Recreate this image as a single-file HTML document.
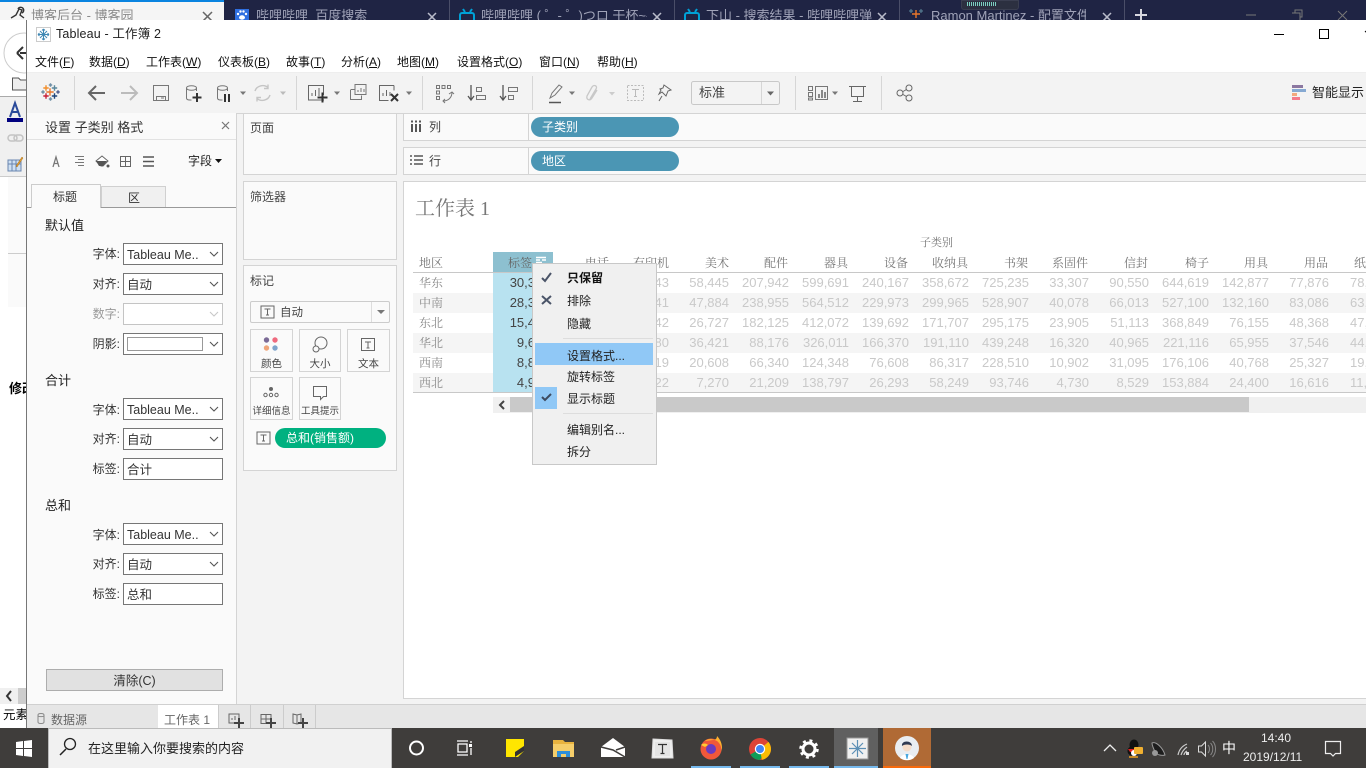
<!DOCTYPE html>
<html lang="zh-CN"><head><meta charset="utf-8"><title>Tableau - 工作簿 2</title>
<style>
*{box-sizing:border-box}
html,body{margin:0;padding:0;width:1366px;height:768px;overflow:hidden;background:#fff;font-family:"Liberation Sans","Noto Sans CJK SC",sans-serif;font-size:12px;color:#222}
.b{position:absolute}
.t{position:absolute;white-space:nowrap;line-height:16px}
.tab{position:absolute;top:8px;height:16px;line-height:16px;font-size:13px;color:#a0a3b8;white-space:nowrap;overflow:hidden}
.m{position:absolute;top:53px;font-size:12px;line-height:18px;color:#111;white-space:nowrap}
.p{position:absolute;background:#fafafa;border:1px solid #d4d4d4}
.lab{position:absolute;left:60px;width:60px;text-align:right;font-size:12px;line-height:16px;color:#333;white-space:nowrap}
.sel{position:absolute;left:123px;width:100px;height:22px;background:#fff;border:1px solid #767676;font-size:12.5px;line-height:21px;padding-left:3px;padding-top:1px;color:#333;white-space:nowrap;overflow:hidden}
.sel.d{border-color:#c4c4c4}
.h{position:absolute;top:255px;height:16px;line-height:16px;width:60px;text-align:right;font-family:"Liberation Serif","Noto Serif CJK SC",serif;font-size:12px;color:#777;white-space:nowrap}
.row{position:absolute;left:0;width:1366px;height:20px;line-height:20px;display:flex;font-size:13px;color:#c9c9c9}
.row.g{background:#f5f5f5}
.row span{display:block;flex:0 0 60px;width:60px;text-align:right;white-space:nowrap}
.row span.e{text-align:left;padding-left:21px}
.rl{position:absolute;left:419px;height:20px;line-height:20px;font-family:"Liberation Serif","Noto Serif CJK SC",serif;font-size:12px;color:#8a8a8a}
.mi{position:absolute;left:35px;font-size:12px;line-height:16px;color:#222;white-space:nowrap}
.mk{position:absolute;width:100%;text-align:center;font-size:10.5px;line-height:12px;color:#444;white-space:nowrap;left:0}
.btn{position:absolute;background:#fafafa;border:1px solid #d4d4d4;height:43px}
</style></head><body>

<!-- browser behind -->
<div class="b" style="left:0;top:0;width:1366px;height:20px;background:#1f2444"></div>
<div class="b" style="left:0;top:0;width:224px;height:20px;background:#f5f5f5"></div>
<div class="b" style="left:0;top:0;width:224px;height:2px;background:#0a84e0"></div>
<div class="tab" style="left:31px;color:#8a8a8a">博客后台 - 博客园</div>
<div class="tab" style="left:256px;width:165px">哔哩哔哩_百度搜索</div>
<div class="tab" style="left:481px;width:166px">哔哩哔哩 ( ゜- ゜)つロ 干杯~-bilibili</div>
<div class="tab" style="left:706px;width:166px">下山 - 搜索结果 - 哔哩哔哩弹幕视频网</div>
<div class="tab" style="left:931px;width:155px">Ramon Martinez - 配置文件 | Tableau</div>
<div class="b" style="left:961px;top:0;width:58px;height:10px;background:#2c3040;border-radius:0 0 3px 3px;border:1px solid #3a3e50"></div>
<div class="b" style="left:967px;top:2px;width:29px;height:4px;background:repeating-linear-gradient(90deg,#7bd0c0 0 1px,transparent 1px 2px)"></div>

<svg class="b" style="left:0;top:0" width="1366" height="20" viewBox="0 0 1366 20" fill="none">
<path d="M11 18l5-3 3-6 3 1-2 5 4 3M18 9a3 3 0 1 1 4 4" stroke="#333" stroke-width="1.4"/>
<path d="M203 12l9 9M212 12l-9 9" stroke="#666" stroke-width="1.5"/>
<rect x="235" y="9" width="14" height="11" fill="#2f6fe0"/>
<g fill="#fff"><circle cx="238" cy="14" r="1.200"/><circle cx="246" cy="14" r="1.200"/><circle cx="240.500" cy="11.500" r="1.200"/><circle cx="243.500" cy="11.500" r="1.200"/><ellipse cx="242" cy="17.500" rx="3" ry="2.200"/></g>
<rect x="460" y="13" width="14" height="9" rx="2" stroke="#00a1d6" stroke-width="2"/><path d="M463 9l2 3M472 9l-2 3" stroke="#00a1d6" stroke-width="2"/>
<rect x="685" y="13" width="14" height="9" rx="2" stroke="#00a1d6" stroke-width="2"/><path d="M688 9l2 3M697 9l-2 3" stroke="#00a1d6" stroke-width="2"/>
<path d="M916 10v8M912 14h8" stroke="#e8762b" stroke-width="1.4"/><path d="M911 9v4M909 11h4M921 9v4M919 11h4" stroke="#5b879b" stroke-width="1"/>
<g stroke="#b9bccb" stroke-width="1.5"><path d="M428 13l8 8M436 13l-8 8M653 13l8 8M661 13l-8 8M878 13l8 8M886 13l-8 8M1103 13l8 8M1111 13l-8 8"/></g>
<path d="M1141 9v12M1135 15h12" stroke="#d8d8e0" stroke-width="2"/>
<path d="M449.500 0v20M674.500 0v20M899.500 0v20M1124.500 0v20" stroke="#4a4e68"/>
<path d="M1246 15h10" stroke="#777"/><path d="M1292 13h8v7M1295 13v-3h7v7h-2" stroke="#777"/><path d="M1338 11l9 9M1347 11l-9 9" stroke="#777"/>
</svg>

<!-- left strip of browser -->
<div class="b" style="left:0;top:20px;width:27px;height:708px;background:#fff"></div>
<div class="b" style="left:0;top:96px;width:27px;height:81px;background:#f0f0f0;border-top:1px solid #aaa;border-bottom:1px solid #ccc"></div>
<div class="b" style="left:8px;top:177px;width:19px;height:130px;background:#fafafa"></div>
<div class="b" style="left:8px;top:253px;width:19px;height:1px;background:#ccc"></div>
<div class="t" style="left:9px;top:381px;font-size:13px;font-weight:bold;color:#000;width:17px;overflow:hidden">修改</div>
<div class="b" style="left:0;top:688px;width:27px;height:16px;background:#f0f0f0"></div>
<div class="b" style="left:18px;top:688px;width:9px;height:16px;background:#cdcdcd"></div>
<div class="t" style="left:3px;top:707px;font-size:12.500px;color:#000;width:23px;overflow:hidden">元素</div>
<svg class="b" style="left:0;top:20px" width="27" height="180" viewBox="0 20 27 180" fill="none">
<circle cx="24" cy="53" r="20" stroke="#ccc" stroke-width="1"/>
<path d="M20 53h8M17 53l6-6M17 53l6 6" stroke="#333" stroke-width="2"/>
<path d="M12.500 78h6l2 2h6v10h-14z" stroke="#555" fill="#eee"/>
<path d="M10 117l5-14 5 14M12 112h6" stroke="#2a4a9a" stroke-width="2"/><rect x="7" y="118" width="16" height="4" fill="#00007f"/>
<rect x="8" y="135" width="9" height="6" rx="3" stroke="#c3c3c3" stroke-width="1.500"/><rect x="14" y="135" width="9" height="6" rx="3" stroke="#c3c3c3" stroke-width="1.500"/>
<rect x="8" y="160" width="13" height="11" fill="#cfe0f2" stroke="#6a86b0"/><path d="M8 164h13M12 160v11M16 160v11" stroke="#6a86b0"/><path d="M16 166l6-9 1 1-6 9z" fill="#e8a030" stroke="#a06a18" stroke-width=".5"/>
</svg>
<svg class="b" style="left:0;top:688px" width="18" height="16"><path d="M11 3l-4 5 4 5" stroke="#333" stroke-width="2" fill="none"/></svg>

<!-- tableau window -->
<div class="b" style="left:26px;top:20px;width:1340px;height:708px;background:#f3f3f3;border-left:1px solid #777"></div>
<div class="b" style="left:27px;top:20px;width:1339px;height:52px;background:#fff"></div>
<div class="b" style="left:27px;top:72px;width:1339px;height:1px;background:#eee"></div>
<div class="b" style="left:27px;top:113px;width:1339px;height:1px;background:#d4d4d4"></div>
<div class="t" style="left:56px;top:26px;font-size:12.500px;letter-spacing:.15px;color:#222">Tableau - 工作簿 2</div>
<div class="m" style="left:35px">文件(<u>F</u>)</div>
<div class="m" style="left:89px">数据(<u>D</u>)</div>
<div class="m" style="left:146px">工作表(<u>W</u>)</div>
<div class="m" style="left:218px">仪表板(<u>B</u>)</div>
<div class="m" style="left:286px">故事(<u>T</u>)</div>
<div class="m" style="left:341px">分析(<u>A</u>)</div>
<div class="m" style="left:397px">地图(<u>M</u>)</div>
<div class="m" style="left:457px">设置格式(<u>O</u>)</div>
<div class="m" style="left:539px">窗口(<u>N</u>)</div>
<div class="m" style="left:597px">帮助(<u>H</u>)</div>
<div class="t" style="left:699px;top:85px;font-size:13px;color:#444;z-index:3">标准</div>
<div class="t" style="left:1312px;top:85px;font-size:13px;color:#222;z-index:3">智能显示</div>

<!-- format panel -->
<div class="b" style="left:27px;top:113px;width:210px;height:591px;background:#fafafa;border-right:1px solid #d4d4d4"></div>
<div class="b" style="left:27px;top:139px;width:209px;height:1px;background:#e2e2e2"></div>
<div class="t" style="left:45px;top:120px;font-size:13px;color:#333">设置 子类别 格式</div>
<div class="t" style="left:188px;top:153px;font-size:12px;color:#222">字段</div>
<div class="b" style="left:31px;top:207px;width:205px;height:1px;background:#999"></div>
<div class="b" style="left:101px;top:186px;width:65px;height:21px;background:#f0f0f0;border:1px solid #d0d0d0;border-bottom:0"></div>
<div class="b" style="left:31px;top:184px;width:70px;height:24px;background:#fafafa;border:1px solid #ccc;border-bottom:0"></div>
<div class="b" style="left:27px;top:207px;width:4px;height:1px;background:#999"></div>
<div class="t" style="left:53px;top:189px;font-size:12px;color:#333">标题</div>
<div class="t" style="left:128px;top:190px;font-size:12px;color:#333">区</div>

<div class="t" style="left:45px;top:218px;font-size:13px;color:#222">默认值</div>
<div class="lab" style="top:246px">字体:</div><div class="sel" style="top:243px">Tableau Me..</div>
<div class="lab" style="top:276px">对齐:</div><div class="sel" style="top:273px">自动</div>
<div class="lab" style="top:306px;color:#999">数字:</div><div class="sel d" style="top:303px"></div>
<div class="lab" style="top:336px">阴影:</div><div class="sel" style="top:333px"></div>
<div class="b" style="left:127px;top:337px;width:76px;height:14px;background:#fff;border:1px solid #999"></div>

<div class="t" style="left:45px;top:373px;font-size:13px;color:#222">合计</div>
<div class="lab" style="top:402px">字体:</div><div class="sel" style="top:398px">Tableau Me..</div>
<div class="lab" style="top:431px">对齐:</div><div class="sel" style="top:428px">自动</div>
<div class="lab" style="top:461px">标签:</div><div class="sel" style="top:458px">合计</div>

<div class="t" style="left:45px;top:498px;font-size:13px;color:#222">总和</div>
<div class="lab" style="top:527px">字体:</div><div class="sel" style="top:523px">Tableau Me..</div>
<div class="lab" style="top:556px">对齐:</div><div class="sel" style="top:553px">自动</div>
<div class="lab" style="top:586px">标签:</div><div class="sel" style="top:583px">总和</div>

<div class="b" style="left:46px;top:669px;width:177px;height:22px;background:#e1e1e1;border:1px solid #adadad;text-align:center;font-size:12.500px;line-height:22px;color:#333">清除(C)</div>

<!-- shelves -->
<div class="p" style="left:243px;top:113px;width:154px;height:62px"></div>
<div class="t" style="left:250px;top:120px;color:#444">页面</div>
<div class="p" style="left:243px;top:181px;width:154px;height:79px"></div>
<div class="t" style="left:250px;top:189px;color:#444">筛选器</div>
<div class="p" style="left:243px;top:265px;width:154px;height:206px"></div>
<div class="t" style="left:250px;top:273px;color:#444">标记</div>

<div class="b" style="left:250px;top:301px;width:140px;height:22px;background:#fafafa;border:1px solid #ccc;border-radius:2px"></div>
<div class="b" style="left:371px;top:302px;width:1px;height:20px;background:#ddd"></div>
<div class="t" style="left:280px;top:305px;font-size:11.500px;color:#444">自动</div>

<div class="btn" style="left:250px;top:329px;width:43px"><div class="mk" style="top:28px">颜色</div></div>
<div class="btn" style="left:299px;top:329px;width:42px"><div class="mk" style="top:28px">大小</div></div>
<div class="btn" style="left:347px;top:329px;width:43px"><div class="mk" style="top:28px">文本</div></div>
<div class="btn" style="left:250px;top:377px;width:43px"><div class="mk" style="top:28px;font-size:9.500px">详细信息</div></div>
<div class="btn" style="left:299px;top:377px;width:42px"><div class="mk" style="top:28px;font-size:9.500px">工具提示</div></div>
<div class="b" style="left:275px;top:428px;width:111px;height:20px;border-radius:10px;background:#00b180;color:#fff;font-size:12px;line-height:20px;padding-left:11px;white-space:nowrap">总和(销售额)</div>

<!-- columns / rows shelves -->
<div class="b" style="left:403px;top:113px;width:963px;height:28px;background:#fafafa;border:1px solid #d4d4d4;border-right:0"></div>
<div class="b" style="left:403px;top:147px;width:963px;height:28px;background:#fafafa;border:1px solid #d4d4d4;border-right:0"></div>
<div class="b" style="left:528px;top:114px;width:1px;height:26px;background:#d4d4d4"></div>
<div class="b" style="left:528px;top:148px;width:1px;height:26px;background:#d4d4d4"></div>
<div class="t" style="left:429px;top:119px;color:#444">列</div>
<div class="t" style="left:429px;top:153px;color:#444">行</div>
<div class="b" style="left:531px;top:117px;width:148px;height:20px;border-radius:10px;background:#4b96b4;color:#fff;font-size:12px;line-height:20px;padding-left:11px">子类别</div>
<div class="b" style="left:531px;top:151px;width:148px;height:20px;border-radius:10px;background:#4b96b4;color:#fff;font-size:12px;line-height:20px;padding-left:11px">地区</div>

<!-- view -->
<div class="b" style="left:403px;top:181px;width:963px;height:518px;background:#fff;border:1px solid #d4d4d4;border-right:0"></div>
<div class="t" style="left:415px;top:196px;font-family:'Liberation Serif','Noto Serif CJK SC',serif;font-size:20px;line-height:26px;color:#777">工作表 1</div>
<div class="t" style="left:920px;top:235px;font-family:'Liberation Serif','Noto Serif CJK SC',serif;font-size:11px;color:#777">子类别</div>

<div class="b" style="left:413px;top:273px;width:953px;height:120px;overflow:hidden">
 <div class="row" style="left:76px;top:0;width:960px"><span></span><span></span><span>43</span><span>58,445</span><span>207,942</span><span>599,691</span><span>240,167</span><span>358,672</span><span>725,235</span><span>33,307</span><span>90,550</span><span>644,619</span><span>142,877</span><span>77,876</span><span class="e">78,</span></div>
 <div class="row g" style="left:0;top:20px;width:953px"></div>
 <div class="row" style="left:76px;top:20px;width:960px"><span></span><span></span><span>41</span><span>47,884</span><span>238,955</span><span>564,512</span><span>229,973</span><span>299,965</span><span>528,907</span><span>40,078</span><span>66,013</span><span>527,100</span><span>132,160</span><span>83,086</span><span class="e">63,</span></div>
 <div class="row" style="left:76px;top:40px;width:960px"><span></span><span></span><span>42</span><span>26,727</span><span>182,125</span><span>412,072</span><span>139,692</span><span>171,707</span><span>295,175</span><span>23,905</span><span>51,113</span><span>368,849</span><span>76,155</span><span>48,368</span><span class="e">47,</span></div>
 <div class="row g" style="left:0;top:60px;width:953px"></div>
 <div class="row" style="left:76px;top:60px;width:960px"><span></span><span></span><span>80</span><span>36,421</span><span>88,176</span><span>326,011</span><span>166,370</span><span>191,110</span><span>439,248</span><span>16,320</span><span>40,965</span><span>221,116</span><span>65,955</span><span>37,546</span><span class="e">44,</span></div>
 <div class="row" style="left:76px;top:80px;width:960px"><span></span><span></span><span>19</span><span>20,608</span><span>66,340</span><span>124,348</span><span>76,608</span><span>86,317</span><span>228,510</span><span>10,902</span><span>31,095</span><span>176,106</span><span>40,768</span><span>25,327</span><span class="e">19,</span></div>
 <div class="row g" style="left:0;top:100px;width:953px"></div>
 <div class="row" style="left:76px;top:100px;width:960px"><span></span><span></span><span>22</span><span>7,270</span><span>21,209</span><span>138,797</span><span>26,293</span><span>58,249</span><span>93,746</span><span>4,730</span><span>8,529</span><span>153,884</span><span>24,400</span><span>16,616</span><span class="e">11,</span></div>
</div>

<div class="b" style="left:493px;top:252px;width:60px;height:20px;background:#8dc0d0"></div>
<div class="b" style="left:493px;top:273px;width:60px;height:120px;background:#b8e2f0"></div>
<div class="b" style="left:413px;top:272px;width:953px;height:1px;background:#c8c8c8"></div>
<div class="b" style="left:413px;top:392px;width:953px;height:1px;background:#c8c8c8"></div>

<div class="t" style="left:419px;top:255px;font-family:'Liberation Serif','Noto Serif CJK SC',serif;font-size:12px;color:#777">地区</div>
<div class="t" style="left:508px;top:255px;font-family:'Liberation Serif','Noto Serif CJK SC',serif;font-size:12px;color:#666">标签</div>
<div class="h" style="left:549px">电话</div><div class="h" style="left:609px">有印机</div><div class="h" style="left:669px">美术</div><div class="h" style="left:728px">配件</div><div class="h" style="left:788px">器具</div><div class="h" style="left:848px">设备</div><div class="h" style="left:908px">收纳具</div><div class="h" style="left:968px">书架</div><div class="h" style="left:1028px">系固件</div><div class="h" style="left:1088px">信封</div><div class="h" style="left:1149px">椅子</div><div class="h" style="left:1208px">用具</div><div class="h" style="left:1268px">用品</div>
<div class="t" style="left:1354px;top:255px;font-family:'Liberation Serif','Noto Serif CJK SC',serif;font-size:12px;color:#777;width:12px;overflow:hidden">纸张</div>

<div class="rl" style="top:273px">华东</div><div class="rl" style="top:293px">中南</div><div class="rl" style="top:313px">东北</div><div class="rl" style="top:333px">华北</div><div class="rl" style="top:353px">西南</div><div class="rl" style="top:373px">西北</div>

<div class="b" style="left:480px;top:273px;width:55px;height:120px;font-size:13px;line-height:20px;color:#444;text-align:right">
 <div>30,3</div><div>28,3</div><div>15,4</div><div>9,6</div><div>8,8</div><div>4,9</div>
</div>

<!-- scrollbar -->
<div class="b" style="left:493px;top:397px;width:873px;height:16px;background:#f0f0f0"></div>
<div class="b" style="left:510px;top:397px;width:739px;height:15px;background:#c9c9c9"></div>

<!-- bottom tabs -->
<div class="b" style="left:27px;top:704px;width:1339px;height:24px;background:#e6e6e6;border-top:1px solid #d0d0d0"></div>
<div class="b" style="left:158px;top:705px;width:60px;height:23px;background:#fff"></div>
<div class="b" style="left:218px;top:705px;width:1px;height:23px;background:#ccc"></div>
<div class="b" style="left:250px;top:705px;width:1px;height:23px;background:#ccc"></div>
<div class="b" style="left:283px;top:705px;width:1px;height:23px;background:#ccc"></div>
<div class="b" style="left:315px;top:705px;width:1px;height:23px;background:#ccc"></div>
<div class="t" style="left:51px;top:712px;font-size:12px;color:#666">数据源</div>
<div class="t" style="left:164px;top:712px;font-size:12px;color:#666">工作表 1</div>

<!-- icons overlay -->
<svg class="b" style="left:0;top:0" width="1366" height="728" viewBox="0 0 1366 728" fill="none">
<defs>
<g id="car"><path d="M-3-1.500h6l-3 3.500z" fill="#777"/></g>
<g id="tb"><rect x="-6.500" y="-6" width="13" height="12" stroke="#666"/><path d="M-3-3h6M0-3v6M-1.500 3h3" stroke="#666"/></g>
</defs>
<!-- window title icon -->
<rect x="36.500" y="27.500" width="14" height="14" stroke="#ccc" fill="#fff"/>
<g stroke="#3f88b4" stroke-width="1"><path d="M43.500 29v11M38 34.500h11M43.500 29l-1.500 1.500M43.500 29l1.500 1.500M43.500 40l-1.500-1.500M43.500 40l1.500-1.500M38 34.500l1.500-1.500M38 34.500l1.500 1.500M49 34.500l-1.500-1.500M49 34.500l-1.500 1.500M40 31l7 7M47 31l-7 7"/></g>
<path d="M1274 34.500h10" stroke="#000"/><rect x="1319.500" y="29.500" width="9" height="9" stroke="#000"/><path d="M1365 31l2 2" stroke="#000"/>

<!-- toolbar: tableau logo -->
<g stroke-width="1.400">
<path d="M46 85.300v5.400M43.300 88h5.400" stroke="#f28e2b"/>
<path d="M54.500 85.300v5.400M51.800 88h5.400" stroke="#5b879b"/>
<path d="M46 93.300v5.400M43.300 96h5.400" stroke="#c72037"/>
<path d="M54.500 93.300v5.400M51.800 96h5.400" stroke="#1f447a"/>
<path d="M50 88.300v7.400M46.300 92h7.400" stroke="#e8762b"/>
<path d="M50.500 83.300v3.400M48.800 85h3.400M50.500 97.300v3.400M48.800 99h3.400" stroke="#6f8fa6"/>
<path d="M43 90.300v3.400M41.300 92h3.400" stroke="#6b8ca0"/>
<path d="M58 90.300v3.400M56.300 92h3.400" stroke="#4a5a8c"/>
</g>
<g stroke="#d6d6d6"><path d="M74.500 76v34M296.500 76v34M422.500 76v34M532.500 76v34M795.500 76v34M881.500 76v34"/></g>
<path d="M105 93H90M96 86l-7 7 7 7" stroke="#666" stroke-width="2"/>
<path d="M121 93h15M130 86l7 7-7 7" stroke="#bbb" stroke-width="2"/>
<path d="M153.500 85.500h15v15h-15zM156.500 100.500v-4h9v4M161 98h3" stroke="#777"/>
<path d="M186.500 88c0-3 10-3 10 0v3M186.500 88v10c0 2 2 2 5 2M186.500 88c0 3 10 3 10 0" stroke="#777"/><path d="M197 93v9M192.500 97.500h9" stroke="#333" stroke-width="2"/>
<path d="M217.500 88c0-3 10-3 10 0v3M217.500 88v10c0 2 2 2 5 2M217.500 88c0 3 10 3 10 0" stroke="#777"/><path d="M225 94v8M229 94v8" stroke="#333" stroke-width="2"/>
<use href="#car" x="243" y="93"/>
<path d="M255 91a8 7.500 0 0 1 13-3.500M270 95a8 7.500 0 0 1-13 3.500M268 84.500v4h-4M257 101.500v-4h4" stroke="#c5c5c5" stroke-width="1.400"/>
<path d="M280 91.500h6l-3 3.500z" fill="#bbb"/>
<path d="M324 100h-15.500V85.500h15V95M312 96v-3M315.500 96v-6M319 96v-8" stroke="#666"/><path d="M322.500 92.500v10M317.500 97.500h10" stroke="#333" stroke-width="2"/>
<use href="#car" x="337" y="93"/>
<path d="M355 84.500h11v10h-11zM351 89.500h4M350.500 89.500v10h11v-4M358 92v-2M361 92v-4M364 92v-3" stroke="#777"/>
<path d="M394 85.500h-14.500v15h9M383 96v-3M386.500 96v-6M390 96v-4M394 85.500v5" stroke="#666"/><path d="M391 94l7 7M398 94l-7 7" stroke="#333" stroke-width="2"/>
<use href="#car" x="409" y="93"/>
<path d="M436.500 85.500h3v3h-3zM442 85.500h3v3h-3zM447.500 85.500h3v3h-3zM436.500 91h3v3h-3zM436.500 96.500h3v3h-3z" stroke="#777"/><path d="M443 101c5 0 9-3 9-9M449 94l3-2 2 2M445 99l-2 2 2 2" stroke="#777"/>
<path d="M471 85v14M468 96l3 4 3-4" stroke="#555" stroke-width="1.300"/><path d="M476.500 87.500h5v4h-5zM476.500 95.500h9v4h-9z" stroke="#777"/>
<path d="M503 85v14M500 96l3 4 3-4" stroke="#555" stroke-width="1.300"/><path d="M508.500 87.500h9v4h-9zM508.500 95.500h5v4h-5z" stroke="#777"/>
<path d="M550 98l2-5 7-8 3 2-7 8z" stroke="#777"/><path d="M549 102.500h12" stroke="#555" stroke-width="1.500"/>
<use href="#car" x="572" y="93"/>
<path d="M590 99l6-10c2-3-2-5-4-2l-5 9c-1 4 3 5 5 2l5-8" stroke="#c8c8c8" stroke-width="1.300"/>
<path d="M609 92h6l-3 3.500z" fill="#ccc"/>
<rect x="627.500" y="85.500" width="16" height="15" stroke="#bbb" stroke-dasharray="2 1.500"/><path d="M632 89.500h7M635.500 89.500v7M634 96.500h3" stroke="#bbb"/>
<path d="M664 85l7 5-3 1-2 5-4-4-3 2 2-4-1-1 3-1z" stroke="#666"/><path d="M659 101l3-5" stroke="#666"/>
<rect x="691.500" y="81.500" width="88" height="23" rx="2" fill="#f3f3f3" stroke="#c8c8c8"/><path d="M761.500 82v22" stroke="#d6d6d6"/><path d="M767 91.500h7l-3.500 4z" fill="#666"/>
<path d="M808.500 86.500h4v4h-4zM808.500 92.500h4v4h-4zM808.500 98h4v2h-4zM815.500 86.500h12v13h-12z" stroke="#777"/><path d="M819 98v-4M822 98v-8M825 98v-6" stroke="#666" stroke-width="1.500"/>
<use href="#car" x="835" y="93"/>
<path d="M849 86.500h17M851.500 86.500v10h12v-10M857.500 96.500v5M853 101.500h9" stroke="#666"/>
<circle cx="900" cy="93" r="3" stroke="#666"/><circle cx="909" cy="88" r="3" stroke="#666"/><circle cx="909" cy="98" r="3" stroke="#666"/><path d="M903 91.500l3.500-2M903 94.500l3.500 2" stroke="#666"/>
<rect x="1292" y="85" width="11" height="3" fill="#8b77a0"/><rect x="1292" y="89" width="14" height="3" fill="#86a9d2"/><rect x="1292" y="93" width="5" height="3" fill="#f2a87e"/><rect x="1292" y="97" width="8" height="3" fill="#f47a8c"/>

<!-- format panel icons -->
<path d="M222 122l7 7M229 122l-7 7" stroke="#777" stroke-width="1.200"/>
<path d="M53 167l3-10 3 10M54 163.500h4" stroke="#777" stroke-width="1.300"/>
<path d="M75 156.500h9M78 159.500h6M75 162.500h9M78 165.500h6" stroke="#777"/>
<path d="M96 161l6-5 6 5-5 5-2 0z" stroke="#666" fill="#fff"/><path d="M96 161h11l-4 5h-4z" fill="#555"/><circle cx="108" cy="166" r="1.500" fill="#555"/>
<rect x="120.500" y="156.500" width="10" height="10" stroke="#666"/><path d="M125.500 156.500v10M120.500 161.500h10" stroke="#666"/>
<path d="M143 157h11M143 161.500h11M143 166h11" stroke="#555" stroke-width="1.500"/>
<path d="M215 159h7l-3.500 4z" fill="#111"/>
<g stroke="#555" stroke-width="1.100"><path d="M210 252l4 4 4-4M210 282l4 4 4-4M210 342l4 4 4-4M210 407l4 4 4-4M210 437l4 4 4-4M210 532l4 4 4-4M210 562l4 4 4-4"/></g>
<path d="M210 312l4 4 4-4" stroke="#c8c8c8" stroke-width="1.100"/>

<!-- shelf icons -->
<path d="M412 124v8M416 124v8M420 124v8M412 120.500v2M416 120.500v2M420 120.500v2" stroke="#555" stroke-width="2"/>
<path d="M414 156h9M414 160h9M414 164h9M410 156h2M410 160h2M410 164h2" stroke="#555" stroke-width="1.600"/>

<!-- marks icons -->
<use href="#tb" x="267.500" y="312"/>
<path d="M377 310h8l-4 4z" fill="#777"/>
<circle cx="266.500" cy="340" r="2.700" fill="#7b6a96"/><circle cx="275" cy="340" r="2.700" fill="#ef6a7e"/><circle cx="266.500" cy="348" r="2.700" fill="#f0a67a"/><circle cx="275" cy="348" r="2.700" fill="#7fa4cc"/>
<circle cx="321" cy="343" r="6" stroke="#666"/><circle cx="316" cy="349" r="3" stroke="#666" fill="#fafafa"/>
<rect x="361.500" y="338.500" width="13" height="12" stroke="#666"/><path d="M365 342h6M368 342v6M366.500 348h3" stroke="#666"/>
<circle cx="271" cy="389" r="2" fill="#666"/><circle cx="265.500" cy="395" r="1.700" stroke="#666"/><circle cx="271" cy="395" r="1.700" stroke="#666"/><circle cx="276.500" cy="395" r="1.700" stroke="#666"/>
<path d="M313.500 386.500h13v10h-3l-3 3v-3h-7z" stroke="#666"/>
<use href="#tb" x="263.500" y="438"/>

<!-- header sort/menu icon -->
<path d="M536 257.500h10M536 260h4M542 260h4M536 262.500h6" stroke="#fff" stroke-width="1.500"/>

<!-- scroll arrow -->
<path d="M504 401l-4 4 4 4" stroke="#444" stroke-width="2"/>

<!-- bottom tab icons -->
<path d="M38 715c0-2 6-2 6 0v7c0 2-6 2-6 0zM38 715.500c0 1.500 6 1.500 6 0" stroke="#888"/>
<path d="M229 714h10v9h-10zM232 720v-2M235 720v-4" stroke="#666"/><path d="M239 718v10M234 723h10" stroke="#444" stroke-width="2"/>
<path d="M261 714.500h10v9h-10zM261 719h10M266 714.500v9" stroke="#666"/><path d="M271 718v10M266 723h10" stroke="#444" stroke-width="2"/>
<path d="M293 714l4 1 4-1v9l-4 1-4-1zM297 715v9" stroke="#666"/><path d="M303 718v10M298 723h10" stroke="#444" stroke-width="2"/>
</svg>

<!-- context menu -->
<div class="b" style="left:532px;top:263px;width:125px;height:202px;background:#f0f0f0;border:1px solid #c8c8c8">
 <div class="b" style="left:2px;top:79px;width:118px;height:22px;background:#90c8f6"></div>
 <div class="b" style="left:2px;top:123px;width:22px;height:22px;background:#90c8f6"></div>
 <div class="b" style="left:30px;top:74px;width:90px;height:1px;background:#ddd"></div>
 <div class="b" style="left:30px;top:149px;width:90px;height:1px;background:#ddd"></div>
 <div class="mi" style="left:34px;top:6px;font-weight:bold;color:#111">只保留</div>
 <div class="mi" style="left:34px;top:29px">排除</div>
 <div class="mi" style="left:34px;top:52px">隐藏</div>
 <div class="mi" style="left:34px;top:84px">设置格式...</div>
 <div class="mi" style="left:34px;top:105px">旋转标签</div>
 <div class="mi" style="left:34px;top:127px">显示标题</div>
 <div class="mi" style="left:34px;top:158px">编辑别名...</div>
 <div class="mi" style="left:34px;top:180px">拆分</div>
 <svg class="b" style="left:0;top:0" width="30" height="150" fill="none">
  <path d="M9 14l3 3 6-8" stroke="#4a5468" stroke-width="2"/>
  <path d="M9 32l9 8M18 32l-9 8" stroke="#4a5468" stroke-width="2"/>
  <path d="M9 133l3 3 6-6" stroke="#3d4a60" stroke-width="2"/>
 </svg>
</div>

<!-- taskbar -->
<div class="b" style="left:0;top:728px;width:1366px;height:40px;background:#3f3d3b"></div>
<div class="b" style="left:48px;top:728px;width:344px;height:40px;background:#f1f1f1;border:1px solid #bbb;border-bottom:0"></div>
<div class="t" style="left:88px;top:741px;font-size:13px;color:#222">在这里输入你要搜索的内容</div>
<div class="b" style="left:834px;top:728px;width:44px;height:40px;background:#606060"></div>
<div class="b" style="left:883px;top:728px;width:48px;height:40px;background:#b06a35"></div>
<div class="b" style="left:691px;top:766px;width:40px;height:2px;background:#76b9ed"></div>
<div class="b" style="left:740px;top:766px;width:40px;height:2px;background:#76b9ed"></div>
<div class="b" style="left:789px;top:766px;width:40px;height:2px;background:#76b9ed"></div>
<div class="b" style="left:834px;top:766px;width:44px;height:2px;background:#76b9ed"></div>
<div class="b" style="left:883px;top:766px;width:48px;height:2px;background:#f76a0c"></div>
<div class="t" style="left:1229px;top:740px;font-size:14px;color:#fff;transform:translateX(-7px)">中</div>
<div class="t" style="left:1261px;top:730px;font-size:12px;color:#eee">14:40</div>
<div class="t" style="left:1243px;top:749px;font-size:12px;color:#eee">2019/12/11</div>
<svg class="b" style="left:0;top:728px" width="1366" height="40" viewBox="0 728 1366 40" fill="none">
<path d="M16 742l7-1v7h-7zM24 741l8-1v8h-8zM16 749h7v7l-7-1zM24 749h8v8l-8-1z" fill="#fff"/>
<circle cx="70" cy="744" r="5.500" stroke="#222" stroke-width="1.300"/><path d="M66 749l-6 6" stroke="#222" stroke-width="1.500"/>
<circle cx="416.500" cy="748" r="6.500" stroke="#fff" stroke-width="2"/>
<path d="M457 741h11M457 755h11M458 744h9v8h-9zM471 741v2M471 748v7" stroke="#fff" stroke-width="1.300"/><rect x="469" y="744" width="3" height="3" fill="#fff"/>
<path d="M506 739h18v12l-6 6h-12z" fill="#ffe600"/><path d="M524 746v5l-9 6v-5z" fill="#333"/>
<path d="M553 740h10l2 2h9v15h-21z" fill="#e8b33f"/><rect x="553" y="744" width="21" height="13" fill="#f5ce6a"/><path d="M557 757v-6h13v6h-4v-3h-5v3z" fill="#2f8fd8"/>
<path d="M601 747l12-9 12 9v10h-24z" fill="#fff"/><path d="M601 747l12 3 12 7M625 747l-9 3" stroke="#3f3d3b" stroke-width="1.500"/>
<path d="M653 739l19 1 1 18-21 0z" fill="#eee" stroke="#ddd"/><rect x="655" y="742" width="15" height="14" fill="#e4e4e4"/><path d="M658 744.500h9M662.500 744.500v9M660.500 753.500h4" stroke="#333" stroke-width="1.200"/>
<circle cx="711" cy="749" r="10.500" fill="#f0583a"/><path d="M705 741c3-3 8-2 12 0 4 3 5 8 4 12l1-5c0-6-3-10-5-12 0 3-2 4-4 4z" fill="#ffb02e"/><circle cx="711" cy="749" r="5" fill="#6a3bc0"/><path d="M701 745c2-2 5-2 7 0l-3 2z" fill="#ffcb32"/>
<circle cx="760" cy="749" r="11" fill="#dc4437"/><path d="M760 749l-9.500 5.500a11 11 0 0 0 9.500 5.500l5-8z" fill="#0f9d58"/><path d="M760 738a11 11 0 0 1 9.500 16.500L760 749v-11z" fill="#fbbc05" transform="rotate(50 760 749)"/><circle cx="760" cy="749" r="5.200" fill="#fff"/><circle cx="760" cy="749" r="4" fill="#4285f4"/>
<circle cx="809" cy="749" r="6" stroke="#fff" stroke-width="3"/><circle cx="809" cy="749" r="8.500" stroke="#fff" stroke-width="2.500" stroke-dasharray="3 3.700"/>
<rect x="847" y="738" width="21" height="21" fill="#f0f0f0" stroke="#999"/><g stroke="#5b8fb5" stroke-width="1.200"><path d="M857.500 740v17M849 748.500h17M852 743l11 11M863 743l-11 11"/></g>
<circle cx="907" cy="748" r="12" fill="#e9edf1"/><circle cx="907" cy="747" r="4.500" fill="#f5dcc8"/><path d="M902 746c-1-6 10-6 10 0-2-2-8-2-10 0z" fill="#2f3a52"/><path d="M900 758c2-5 12-5 14 0a12 12 0 0 1-14 0z" fill="#fff"/><path d="M905.500 754h3l-1 5h-1z" fill="#4aa8e0"/>
<path d="M1104 751l6-6 6 6" stroke="#eee" stroke-width="1.300"/>
<ellipse cx="1134" cy="745" rx="4.500" ry="5.500" fill="#111"/><ellipse cx="1133" cy="751" rx="5.500" ry="5" fill="#111"/><path d="M1128 749h10l-2 3h-6z" fill="#e02020"/><circle cx="1134" cy="753" r="3" fill="#fff"/><rect x="1134" y="747" width="9" height="7" rx="1" fill="#f0b030"/><path d="M1129 757h5M1134 757h4" stroke="#f0a020" stroke-width="1.500"/>
<path d="M1152 743c4-2 11 5 13 12-3 1-8 0-10-3-1-3-3-6-3-9z" fill="#1d1d1d" stroke="#999"/><circle cx="1155" cy="753" r="3" fill="#999"/>
<path d="M1178 755c1-5 4-9 9-11M1181 755c1-3 3-6 6-8M1184 755c0-1 1-3 3-4" stroke="#ccc" stroke-width="1.200"/><rect x="1186" y="752" width="3" height="3" fill="#ddd"/>
<path d="M1198.500 746h3l4-4v14l-4-4h-3z" stroke="#ddd"/><path d="M1208 745c2 2 2 6 0 8M1210.500 743c3 3 3 9 0 12M1212.500 741c4 4 4 12 0 16" stroke="#888"/>
<path d="M1325.500 741.500h15v12h-5l-2.500 2.500-2.500-2.500h-5z" stroke="#eee" stroke-width="1.200"/>
</svg>
</body></html>
